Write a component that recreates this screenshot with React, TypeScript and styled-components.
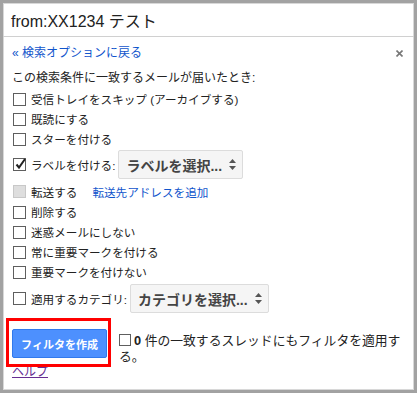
import React from "react";
import styled, { createGlobalStyle } from "styled-components";

const Global = createGlobalStyle`
  html, body { margin: 0; padding: 0; background: #fff; }
  body {
    font-family: "Liberation Sans", Arial, "Noto Sans CJK JP", sans-serif;
    color: #222;
  }
`;

const Frame = styled.div`
  box-sizing: border-box;
  width: 417px;
  height: 393px;
  border: 3px solid #a2a2a2;
  box-shadow: inset 0 0 0 1px #d8d8d8;
  display: flex;
  flex-direction: column;
`;

const Header = styled.div`
  box-sizing: border-box;
  height: 34px;
  padding: 10px 0 0 8px;
  border-bottom: 1px solid #d0d0d0;
  font-size: 16px;
  line-height: 18px;
  color: #222;
`;

const Body = styled.div`
  padding: 8px 9px 0 9px;
  display: flex;
  flex-direction: column;
`;

const TopLine = styled.div`
  display: flex;
  justify-content: space-between;
  align-items: center;
  height: 16px;
`;

const BackLink = styled.a`
  font-size: 12px;
  line-height: 16px;
  color: #15c;
  text-decoration: none;
  cursor: pointer;
`;

const Close = styled.svg`
  width: 7px;
  height: 7px;
  margin-right: 2px;
`;

const Description = styled.div`
  margin-top: 9px;
  height: 16px;
  font-size: 12px;
  line-height: 16px;
`;

const Row = styled.div<{ $h?: number; $mt?: number }>`
  display: flex;
  align-items: center;
  gap: 5px;
  height: ${(p) => p.$h ?? 20}px;
  margin-top: ${(p) => p.$mt ?? 0}px;
  font-size: 11.6px;
  padding-left: 1px;
`;

const Box = styled.span<{ $disabled?: boolean; $inline?: boolean }>`
  box-sizing: border-box;
  position: relative;
  display: inline-block;
  flex: none;
  width: ${(p) => (p.$inline ? 12 : 13)}px;
  height: ${(p) => (p.$inline ? 12 : 13)}px;
  margin-right: ${(p) => (p.$inline ? 3 : 0)}px;
  border: 1px solid ${(p) => (p.$disabled ? "#c8c8c8" : "#5e5e5e")};
  background: ${(p) => (p.$disabled ? "#dedede" : "#fff")};
  vertical-align: ${(p) => (p.$inline ? "-1px" : "baseline")};
  svg {
    position: absolute;
    left: 0px;
    top: -2px;
  }
`;

const RowLink = styled.a`
  color: #15c;
  margin-left: 10px;
  cursor: pointer;
`;

const Select = styled.div`
  box-sizing: border-box;
  display: inline-flex;
  align-items: center;
  gap: 7px;
  height: 29px;
  margin-left: -2px;
  padding: 0 6px 0 7px;
  background: #f5f5f5;
  border: 1px solid #dcdcdc;
  border-radius: 2px;
  font-size: 14px;
  font-weight: bold;
  color: #444;
`;

const ButtonRow = styled.div`
  display: flex;
  align-items: flex-start;
  margin-top: 16px;
`;

const Mark = styled.div`
  position: relative;
  flex: none;
  &::after {
    content: "";
    position: absolute;
    left: -6px;
    right: -4px;
    top: -11px;
    bottom: -9px;
    border: 3px solid #f00;
    pointer-events: none;
  }
`;

const CreateButton = styled.button`
  box-sizing: border-box;
  width: 95px;
  height: 29px;
  padding: 0;
  background: #4d90fe;
  border: 1px solid #3079ed;
  border-radius: 2px;
  color: #fff;
  font-family: inherit;
  font-size: 11px;
  font-weight: bold;
`;

const ApplyText = styled.div`
  margin: 4px 0 0 12px;
  width: 285px;
  font-size: 12.8px;
  line-height: 16px;
  color: #222;
  b {
    font-weight: bold;
  }
`;

const Help = styled.a`
  margin-top: 0;
  align-self: flex-start;
  font-size: 12px;
  line-height: 14px;
  color: #662d91;
  text-decoration: underline;
  cursor: pointer;
`;

const Check = () => (
  <svg width="13" height="14" viewBox="0 0 13 14">
    <path d="M2.5 7.5 L5 10.5 L11 2" fill="none" stroke="#222" strokeWidth="2" />
  </svg>
);

const Arrows = () => (
  <svg width="7" height="11" viewBox="0 0 7 11">
    <path d="M3.5 0 L7 4 L0 4 Z M0 7 L7 7 L3.5 11 Z" fill="#555" />
  </svg>
);

type Opt = { label: string };

const CheckBox: React.FC<{ checked?: boolean; disabled?: boolean; inline?: boolean }> = ({
  checked,
  disabled,
  inline,
}) => (
  <Box $disabled={disabled} $inline={inline}>
    {checked && <Check />}
  </Box>
);

const upper: Opt[] = [
  { label: "受信トレイをスキップ (アーカイブする)" },
  { label: "既読にする" },
  { label: "スターを付ける" },
];

const lower: Opt[] = [
  { label: "削除する" },
  { label: "迷惑メールにしない" },
  { label: "常に重要マークを付ける" },
  { label: "重要マークを付けない" },
];

export default function App() {
  return (
    <>
      <Global />
      <Frame>
        <Header>from:XX1234 テスト</Header>
        <Body>
          <TopLine>
            <BackLink>« 検索オプションに戻る</BackLink>
            <Close viewBox="0 0 7 7">
              <path d="M0.5 0.5 L6.5 6.5 M6.5 0.5 L0.5 6.5" stroke="#777" strokeWidth="1.6" />
            </Close>
          </TopLine>
          <Description>この検索条件に一致するメールが届いたとき:</Description>
          <Row $mt={3}>
            <CheckBox />
            {upper[0].label}
          </Row>
          {upper.slice(1).map((o) => (
            <Row key={o.label}>
              <CheckBox />
              {o.label}
            </Row>
          ))}
          <Row $h={29} $mt={1}>
            <CheckBox checked />
            ラベルを付ける:
            <Select>
              ラベルを選択...
              <Arrows />
            </Select>
          </Row>
          <Row $h={21} $mt={2}>
            <CheckBox disabled />
            転送する
            <RowLink>転送先アドレスを追加</RowLink>
          </Row>
          {lower.map((o) => (
            <Row key={o.label}>
              <CheckBox />
              {o.label}
            </Row>
          ))}
          <Row $h={29} $mt={2}>
            <CheckBox />
            適用するカテゴリ:
            <Select>
              カテゴリを選択...
              <Arrows />
            </Select>
          </Row>
          <ButtonRow>
            <Mark>
              <CreateButton>フィルタを作成</CreateButton>
            </Mark>
            <ApplyText>
              <CheckBox inline />
              <b>0</b> 件の一致するスレッドにもフィルタを適用する。
            </ApplyText>
          </ButtonRow>
          <Help>ヘルプ</Help>
        </Body>
      </Frame>
    </>
  );
}
